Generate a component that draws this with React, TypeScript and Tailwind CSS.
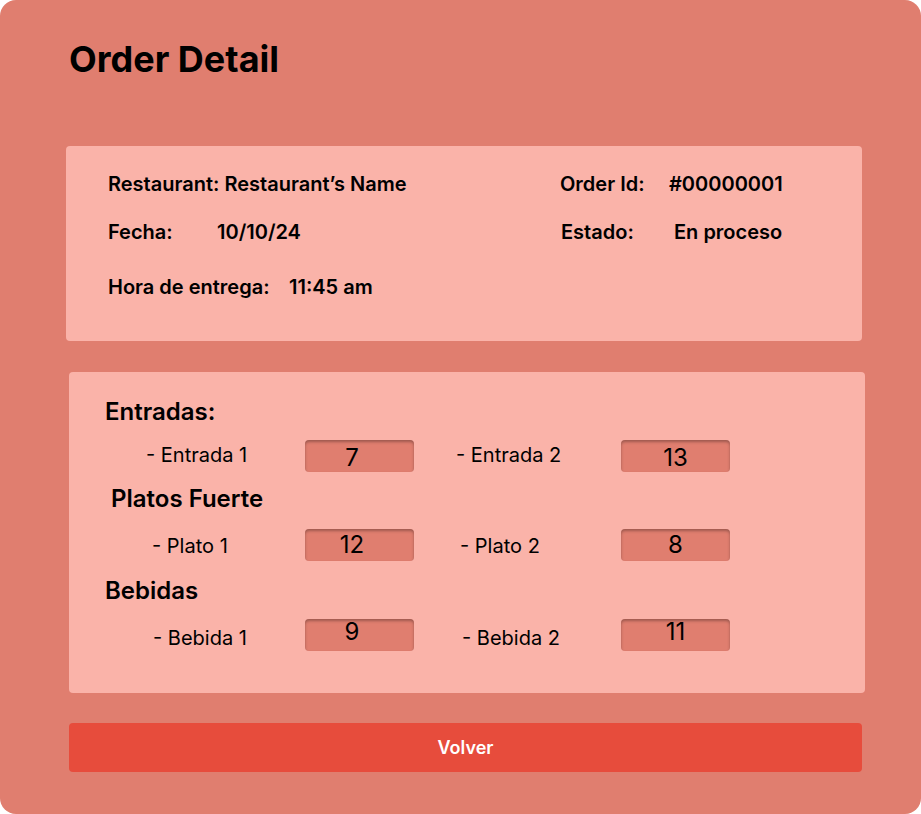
import React from "react";

const font = { fontFamily: "Inter, 'Noto Sans', sans-serif" };

function QtyBox({ value, shift }: { value: number; shift: string }) {
  return (
    <div
      className={`w-[109px] h-[32px] rounded-[4px] bg-[#e07e6f] shadow-[inset_0_2px_3px_rgba(0,0,0,0.3)] flex justify-center items-center text-[24px] leading-none text-black ${shift}`}
    >
      {value}
    </div>
  );
}

function ItemRow({
  a,
  b,
  va,
  vb,
  offA,
  offB,
  dy,
}: {
  a: string;
  b: string;
  va: number;
  vb: number;
  offA: string;
  offB: string;
  dy: string;
}) {
  return (
    <div className="flex items-center h-[32px] text-[20px] text-black">
      <span className={`w-[236px] ${offA}`}>{a}</span>
      <QtyBox value={va} shift={`pr-[15px] ${dy}`} />
      <span className={`w-[207px] ${offB}`}>{b}</span>
      <QtyBox value={vb} shift={dy} />
    </div>
  );
}

export default function App() {
  return (
    <div className="w-[921px] h-[814px] bg-white" style={font}>
      <div className="w-full h-full rounded-[16px] bg-[#e07e6f] pt-[41px]">
        <h1 className="ml-[69px] text-[36px] leading-[36px] font-bold text-black">
          Order Detail
        </h1>

        {/* info panel */}
        <div className="mt-[69px] ml-[66px] w-[796px] h-[195px] rounded-[4px] bg-[#fab3a9] pt-[26px] pl-[42px] text-[20px] leading-[24px] font-semibold text-black">
          <div className="flex">
            <span className="w-[452px]">Restaurant: Restaurant’s Name</span>
            <span className="w-[109px]">Order Id:</span>
            <span>#00000001</span>
          </div>
          <div className="flex mt-[24px]">
            <span className="w-[109px]">Fecha:</span>
            <span className="w-[344px]">10/10/24</span>
            <span className="w-[113px]">Estado:</span>
            <span>En proceso</span>
          </div>
          <div className="flex mt-[31px]">
            <span className="w-[181px]">Hora de entrega:</span>
            <span>11:45 am</span>
          </div>
        </div>

        {/* items panel */}
        <div className="mt-[31px] ml-[69px] w-[796px] h-[321px] rounded-[4px] bg-[#fab3a9] pt-[26px] text-black">
          <h2 className="pl-[36px] text-[24px] leading-[28px] font-semibold">Entradas:</h2>
          <div className="mt-[14px]">
            <ItemRow a="- Entrada 1" b="- Entrada 2" va={7} vb={13} offA="pl-[77px] -mt-[3px]" offB="pl-[42px] -mt-[3px]" dy="pt-[4px]" />
          </div>
          <h2 className="mt-[13px] pl-[42px] text-[24px] leading-[28px] font-semibold">Platos Fuerte</h2>
          <div className="mt-[16px]">
            <ItemRow a="- Plato 1" b="- Plato 2" va={12} vb={8} offA="pl-[83px] mt-[2px]" offB="pl-[46px] mt-[2px]" dy="pt-[0px]" />
          </div>
          <h2 className="mt-[16px] pl-[36px] text-[24px] leading-[28px] font-semibold">Bebidas</h2>
          <div className="mt-[14px]">
            <ItemRow a="- Bebida 1" b="- Bebida 2" va={9} vb={11} offA="pl-[84px] mt-[5px]" offB="pl-[48px] mt-[5px]" dy="pb-[6px]" />
          </div>
        </div>

        <button className="mt-[30px] ml-[69px] w-[793px] h-[49px] rounded-[4px] bg-[#e74c3c] text-white text-[18px] font-semibold">
          Volver
        </button>
      </div>
    </div>
  );
}
